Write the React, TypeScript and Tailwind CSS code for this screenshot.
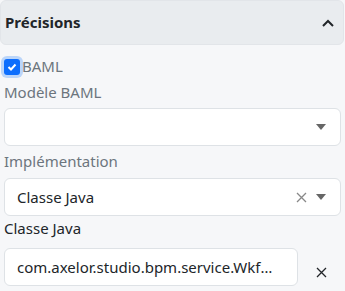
import React from 'react';

const Caret = () => (
  <svg width="10" height="6" viewBox="0 0 10 6" className="text-[#666]">
    <path d="M0 0h10L5 6z" fill="currentColor" />
  </svg>
);

const Cross = ({ className = '' }: { className?: string }) => (
  <svg width="11" height="11" viewBox="0 0 11 11" className={className}>
    <path d="M1 1l9 9M10 1l-9 9" stroke="currentColor" strokeWidth="1.3" fill="none" />
  </svg>
);

export default function App() {
  return (
    <div className="w-[345px] h-[291px] bg-[#f6f7f9] font-['Noto_Sans',sans-serif] overflow-hidden">
      <div className="w-[344px] h-[45px] bg-[#e9ecef] border border-[#e2e5e9] rounded-md flex items-center justify-between pl-[4px] pr-[9px]">
        <span className="text-[15px] font-bold text-[#212529]">Précisions</span>
        <svg width="12" height="8" viewBox="0 0 12 8">
          <path d="M1 7l5-5 5 5" stroke="#212529" strokeWidth="2" fill="none" />
        </svg>
      </div>
      <div className="px-[4px] pt-[13px] flex flex-col">
        <label className="flex items-center gap-[2px] h-[17px]">
          <span className="w-[16px] h-[16px] rounded-[3px] bg-[#0d6efd] ring-[3px] ring-[#0d6efd]/25 flex items-center justify-center">
            <svg width="10" height="8" viewBox="0 0 10 8">
              <path d="M1.5 4l2.5 2.5 4.5-5" stroke="white" strokeWidth="2" fill="none" />
            </svg>
          </span>
          <span className="text-[15px] text-[#6c757d] leading-none">BAML</span>
        </label>
        <div className="text-[15px] text-[#6c757d] mt-[6px] leading-[22px]">Modèle BAML</div>
        <div className="mt-[5px] h-[38px] bg-white border border-[#dee2e6] rounded-md flex items-center justify-end pr-[14px]">
          <Caret />
        </div>
        <div className="text-[15px] text-[#6c757d] mt-[4px] leading-[22px]">Implémentation</div>
        <div className="mt-[6px] h-[38px] bg-white border border-[#dee2e6] rounded-md flex items-center pl-[12px] pr-[14px]">
          <span className="flex-1 text-[15px] text-[#212529]">Classe Java</span>
          <Cross className="text-[#888] mr-[9px]" />
          <Caret />
        </div>
        <div className="text-[15px] text-[#212529] mt-[1px] leading-[22px]">Classe Java</div>
        <div className="mt-[9px] flex items-center">
          <div className="w-[294px] h-[38px] bg-white border border-[#dee2e6] rounded-md flex items-center pl-[12px] pr-[20px] min-w-0">
            <span className="truncate text-[15px] text-[#212529]">com.axelor.studio.bpm.service.WkfModelService</span>
          </div>
          <Cross className="text-[#212529] ml-[18px] mt-[10px]" />
        </div>
      </div>
    </div>
  );
}
